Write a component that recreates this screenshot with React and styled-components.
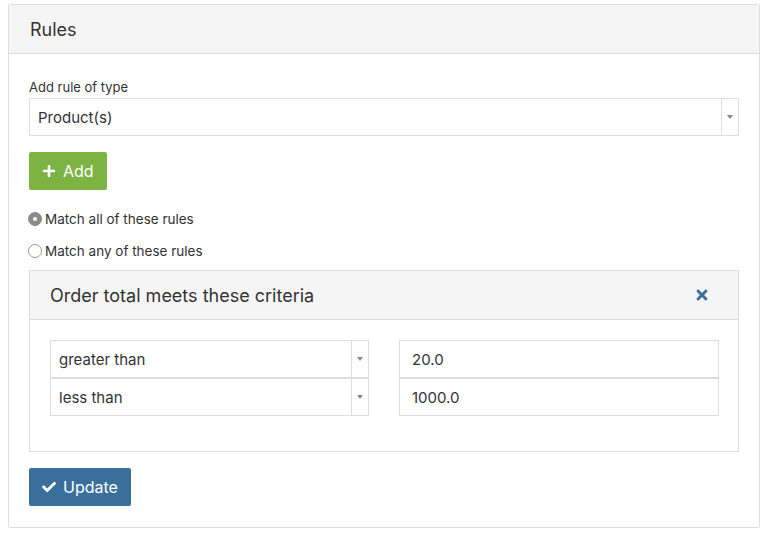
import styled, { createGlobalStyle } from "styled-components";
import { FaPlus, FaCheck, FaTimes } from "react-icons/fa";

const GlobalStyle = createGlobalStyle`
  body {
    margin: 0;
    background: #fff;
    font-family: "Inter", "Liberation Sans", sans-serif;
    color: #333;
  }
  * { box-sizing: border-box; }
`;

const App = () => {
    return (
        <>
            <GlobalStyle />
            <Panel>
                <PanelHeader>Rules</PanelHeader>
                <PanelBody>
                    <Label>Add rule of type</Label>
                    <Select>
                        <SelectText>Product(s)</SelectText>
                        <Caret />
                    </Select>
                    <Button color="#7cb342">
                        <FaPlus size={14} /> Add
                    </Button>
                    <RadioGroup>
                        <RadioRow>
                            <Radio checked /> Match all of these rules
                        </RadioRow>
                        <RadioRow>
                            <Radio /> Match any of these rules
                        </RadioRow>
                    </RadioGroup>
                    <Rule>
                        <RuleHeader>
                            Order total meets these criteria
                            <Remove>
                                <FaTimes size={16} />
                            </Remove>
                        </RuleHeader>
                        <RuleBody>
                            <Criteria>
                                <Select>
                                    <SelectText>greater than</SelectText>
                                    <Caret />
                                </Select>
                                <Input>20.0</Input>
                                <Select>
                                    <SelectText>less than</SelectText>
                                    <Caret />
                                </Select>
                                <Input>1000.0</Input>
                            </Criteria>
                        </RuleBody>
                    </Rule>
                    <Button color="#3a6f9c">
                        <FaCheck size={14} /> Update
                    </Button>
                </PanelBody>
            </Panel>
        </>
    );
};

const Panel = styled.section`
    margin: 4px 13px 0 8px;
    border: 1px solid #ddd;
    border-radius: 2px;
`;

const PanelHeader = styled.div`
    height: 49px;
    padding: 0 21px;
    display: flex;
    align-items: center;
    font-size: 18px;
    background: #f5f5f5;
    border-bottom: 1px solid #ddd;
`;

const PanelBody = styled.div`
    padding: 25px 20px 21px;
    display: flex;
    flex-direction: column;
    align-items: flex-start;
`;

const Label = styled.div`
    font-size: 13px;
    margin-bottom: 3px;
`;

const Select = styled.div`
    width: 100%;
    height: 38px;
    display: flex;
    align-items: center;
    border: 1px solid #ddd;
    background: #fff;
`;

const SelectText = styled.div`
    flex: 1;
    padding: 0 8px;
    font-size: 15px;
`;

const Caret = styled.div`
    width: 17px;
    height: 100%;
    border-left: 1px solid #ddd;
    display: flex;
    align-items: center;
    justify-content: center;
    &::after {
        content: "";
        border-left: 3px solid transparent;
        border-right: 3px solid transparent;
        border-top: 4px solid #888;
    }
`;

const Button = styled.button`
    display: inline-flex;
    align-items: center;
    gap: 7px;
    height: 38px;
    margin-top: 16px;
    padding: 0 13px;
    border: none;
    border-radius: 2px;
    background: ${(p) => p.color};
    color: #fff;
    font-family: inherit;
    font-size: 16px;
`;

const RadioGroup = styled.div`
    margin-top: 21px;
    display: flex;
    flex-direction: column;
    gap: 16px;
    margin-bottom: 11px;
`;

const RadioRow = styled.label`
    display: flex;
    align-items: center;
    gap: 3px;
    font-size: 13.5px;
    margin-left: -1px;
`;

const Radio = styled.span`
    width: 14px;
    height: 14px;
    border-radius: 50%;
    display: flex;
    align-items: center;
    justify-content: center;
    border: 1px solid ${(p) => (p.checked ? "#8a8a8a" : "#999")};
    background: ${(p) => (p.checked ? "#8a8a8a" : "#fff")};
    &::after {
        content: "";
        width: 4px;
        height: 4px;
        border-radius: 50%;
        background: ${(p) => (p.checked ? "#fff" : "transparent")};
    }
`;

const Rule = styled.div`
    width: 100%;
    border: 1px solid #ddd;
`;

const RuleHeader = styled.div`
    height: 49px;
    padding: 0 28px 0 20px;
    display: flex;
    align-items: center;
    justify-content: space-between;
    font-size: 18px;
    background: #f5f5f5;
    border-bottom: 1px solid #ddd;
`;

const Remove = styled.span`
    color: #3a6f9c;
    display: flex;
`;

const RuleBody = styled.div`
    padding: 20px 20px 35px;
`;

const Criteria = styled.div`
    display: grid;
    grid-template-columns: 319px 320px;
    column-gap: 30px;
    row-gap: 0;
`;

const Input = styled.div`
    height: 38px;
    display: flex;
    align-items: center;
    padding: 0 12px;
    border: 1px solid #ddd;
    font-size: 15px;
`;

export default App;
